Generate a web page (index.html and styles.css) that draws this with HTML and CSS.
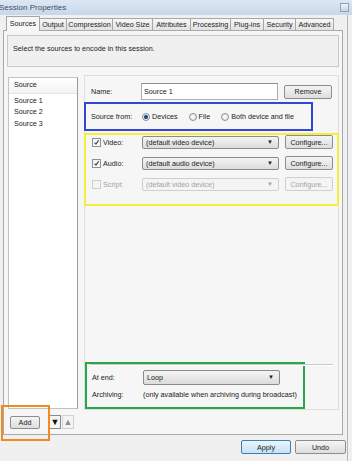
FILE: index.html
```html
<!DOCTYPE html>
<html lang="en">
<head>
    <meta charset="UTF-8">
    <title>Session Properties</title>
    <link rel="stylesheet" href="styles.css">
</head>
<body>
    <div class="window">
        <div class="titlebar">
            <span class="title">Session Properties</span>
            <span class="sysicon"></span>
        </div>
        <div class="client">
            <div class="tabs">
                <div class="tab active" style="width:34px">Sources</div>
                <div class="tab" style="width:28px">Output</div>
                <div class="tab" style="width:47px">Compression</div>
                <div class="tab" style="width:41px">Video Size</div>
                <div class="tab" style="width:39px">Attributes</div>
                <div class="tab" style="width:41px">Processing</div>
                <div class="tab" style="width:34px">Plug-ins</div>
                <div class="tab" style="width:33px">Security</div>
                <div class="tab" style="width:39px">Advanced</div>
            </div>

            <div class="panel">
                <div class="desc">Select the sources to encode in this session.</div>

                <div class="body">
                    <div class="sources">
                        <div class="listbox">
                            <div class="list-head">Source</div>
                            <div class="item">Source 1</div>
                            <div class="item">Source 2</div>
                            <div class="item">Source 3</div>
                        </div>
                        <div class="list-tools">
                            <button class="btn add">Add</button>
                            <button class="arrow down">&#9660;</button>
                            <button class="arrow up">&#9650;</button>
                        </div>
                        <div class="mark orange"></div>
                    </div>

                    <div class="details">
                        <div class="name-row">
                            <span class="label">Name:</span>
                            <div class="input">Source 1</div>
                            <button class="btn remove">Remove</button>
                        </div>

                        <div class="source-from">
                            <span class="label">Source from:</span>
                            <span class="radio on"></span><span class="opt">Devices</span>
                            <span class="radio"></span><span class="opt">File</span>
                            <span class="radio"></span><span class="opt">Both device and file</span>
                        </div>

                        <div class="devices">
                            <div class="dev-row">
                                <span class="check on"><svg viewBox="0 0 9 9"><path d="M2 4.6 L3.8 6.6 L7.2 1.8" /></svg></span>
                                <span class="dev-label">Video:</span>
                                <div class="select">(default video device)<span class="caret">&#9660;</span></div>
                                <button class="btn conf">Configure...</button>
                            </div>
                            <div class="dev-row">
                                <span class="check on"><svg viewBox="0 0 9 9"><path d="M2 4.6 L3.8 6.6 L7.2 1.8" /></svg></span>
                                <span class="dev-label">Audio:</span>
                                <div class="select">(default audio device)<span class="caret">&#9660;</span></div>
                                <button class="btn conf">Configure...</button>
                            </div>
                            <div class="dev-row off">
                                <span class="check"></span>
                                <span class="dev-label">Script:</span>
                                <div class="select">(default video device)<span class="caret">&#9660;</span></div>
                                <button class="btn conf">Configure...</button>
                            </div>
                        </div>

                        <div class="end-box">
                            <div class="sep"></div>
                            <div class="end-row">
                                <span class="label">At end:</span>
                                <div class="select loop">Loop<span class="caret">&#9660;</span></div>
                            </div>
                            <div class="end-row">
                                <span class="label">Archiving:</span>
                                <span>(only available when archiving during broadcast)</span>
                            </div>
                        </div>
                    </div>
                </div>
            </div>

            <div class="footer">
                <button class="btn apply">Apply</button>
                <button class="btn undo">Undo</button>
            </div>
        </div>
    </div>
</body>
</html>
```

FILE: styles.css
```css
* {
    box-sizing: border-box;
}
body {
    margin: 0;
    background-color: #eef0f3;
    font-family: "Liberation Sans", Arial, sans-serif;
    font-size: 7.2px;
    color: #222;
}
button {
    font-family: inherit;
    font-size: inherit;
    color: inherit;
    padding: 0;
}
.window {
    width: 352px;
    height: 461px;
    overflow: hidden;
}
.titlebar {
    height: 15px;
    display: flex;
    align-items: center;
    justify-content: space-between;
    padding-right: 3px;
    background: linear-gradient(#dce7f3, #c6d8eb);
    color: #3d5066;
    font-size: 8px;
}
.title {
    margin-left: -1px;
}
.sysicon {
    width: 9px;
    height: 9px;
    border: 1px solid #8fa2b8;
    background: linear-gradient(#eef3f8, #c9d5e2);
}
.client {
    width: 348px;
    height: 457px;
    background-color: #f0f0f0;
    border-right: 1px solid #b4b4b4;
    border-bottom: 1px solid #8c8c8c;
}
.tabs {
    display: flex;
    align-items: flex-end;
    height: 15px;
    padding-left: 6px;
}
.tab {
    height: 12px;
    line-height: 11px;
    text-align: center;
    border: 1px solid #a7a7a7;
    border-bottom: none;
    margin-right: -1px;
    background: linear-gradient(#f7f7f7, #e2e2e2);
    white-space: nowrap;
}
.tab.active {
    height: 15px;
    line-height: 13px;
    background: #f7f7f7;
    position: relative;
    margin-bottom: -1px;
    z-index: 1;
}
.panel {
    margin-left: 3px;
    width: 340px;
    height: 405px;
    border: 1px solid #a9a9a9;
    background-color: #f6f6f6;
    padding: 4px 3px 0 3px;
}
.desc {
    height: 32px;
    border: 1px solid #c9c9c9;
    background-color: #f0f0f0;
    padding: 8px 5px 0 5px;
}
.body {
    display: flex;
    gap: 6px;
    margin-top: 8px;
    padding-left: 1px;
}
.sources {
    position: relative;
    width: 70px;
    padding-top: 2px;
}
.listbox {
    height: 332px;
    background-color: #fff;
    border: 1px solid #c2c2c2;
    border-right-color: #9b9b9b;
}
.list-head {
    height: 16px;
    line-height: 14px;
    padding-left: 5px;
    background: linear-gradient(#fff, #f3f3f3);
    border-bottom: 1px solid #e5e5e5;
    margin-bottom: 1px;
}
.item {
    height: 11.3px;
    line-height: 11px;
    padding-left: 5px;
}
.list-tools {
    display: flex;
    align-items: center;
    margin-top: 6px;
    padding-left: 2px;
}
.btn {
    height: 14px;
    border: 1px solid #8d8d8d;
    border-radius: 2px;
    background: linear-gradient(#f4f4f4, #dedede);
    text-align: center;
}
.add {
    width: 30px;
    height: 13px;
}
.arrow {
    width: 12px;
    height: 14px;
    font-size: 9px;
    line-height: 12px;
    background-color: #f4f4f4;
}
.arrow.down {
    margin-left: 9px;
    border: 1px solid #8a8a8a;
    color: #111;
}
.arrow.up {
    margin-left: 1px;
    border: 1px solid #d2d2d2;
    color: #8f8f8f;
}
.mark {
    position: absolute;
    pointer-events: none;
}
.orange {
    left: -7px;
    top: 330px;
    width: 49px;
    height: 36px;
    border: 2px solid #f08a24;
}
.details {
    width: 255px;
    height: 335px;
    border: 1px solid #dedede;
    display: flex;
    flex-direction: column;
}
.label {
    width: 51px;
    flex-shrink: 0;
}
.name-row {
    display: flex;
    align-items: center;
    padding: 7px 0 0 6px;
}
.name-row .label {
    width: 50px;
}
.input {
    width: 137px;
    height: 17px;
    line-height: 15px;
    padding-left: 2px;
    background-color: #fff;
    border: 1px solid #acacac;
    border-top-color: #8e8e8e;
}
.remove {
    width: 48px;
    margin-left: 6px;
}
.source-from {
    display: flex;
    align-items: center;
    width: 229px;
    height: 29px;
    margin: 2px 0 0 -1px;
    padding-left: 5px;
    border: 2px solid #3346d6;
}
.radio {
    width: 8px;
    height: 8px;
    border-radius: 50%;
    border: 1px solid #8f8f8f;
    background: radial-gradient(#fff, #dedede);
    margin-right: 2px;
    flex-shrink: 0;
}
.radio.on {
    background: radial-gradient(circle, #1d3a66 0, #2d5a96 1.8px, #f2f2f2 2.4px);
}
.opt {
    margin-right: 11px;
}
.devices {
    width: 255px;
    height: 73px;
    margin: 2px 0 0 -1px;
    padding: 0 0 0 6px;
    border: 2px solid #f4ef3c;
}
.dev-row {
    display: flex;
    align-items: center;
    height: 14px;
    margin-top: 7px;
}
.dev-row:first-child {
    margin-top: 0;
}
.check {
    width: 9px;
    height: 9px;
    border: 1px solid #8e8f8f;
    background: linear-gradient(#f1f1f1, #fff);
    flex-shrink: 0;
    display: flex;
}
.check svg {
    width: 7px;
    height: 7px;
}
.check path {
    fill: none;
    stroke: #27416a;
    stroke-width: 1.4;
}
.dev-label {
    width: 41px;
    padding-left: 2px;
}
.select {
    position: relative;
    width: 137px;
    height: 13px;
    line-height: 11px;
    padding-left: 3px;
    border: 1px solid #8a8a8a;
    border-radius: 2px;
    background: linear-gradient(#f4f4f4, #dcdcdc);
}
.caret {
    position: absolute;
    right: 5px;
    top: 0;
    font-size: 6px;
    line-height: 11px;
}
.conf {
    width: 48px;
    margin-left: 6px;
}
.dev-row.off {
    color: #a3a3a3;
}
.dev-row.off .check,
.dev-row.off .select,
.dev-row.off .conf {
    border-color: #cfcfcf;
    background: #f4f4f4;
}
.end-box {
    margin: auto 0 0 0;
    width: 220px;
    height: 47px;
    padding: 0 0 0 5px;
    border: 2px solid #27a84a;
}
.sep {
    width: 243px;
    height: 2px;
    margin: 0 0 0 -2px;
    background-color: #c9c9c9;
    border-bottom: 1px solid #fff;
}
.end-row {
    display: flex;
    align-items: center;
    height: 16px;
    margin-top: 3px;
}
.end-row + .end-row {
    margin-top: 1px;
}
.loop {
    height: 15px;
    line-height: 13px;
}
.loop .caret {
    line-height: 13px;
}
.footer {
    display: flex;
    justify-content: flex-end;
    gap: 4px;
    padding: 5px 1px 0 0;
}
.apply {
    width: 50px;
    border-color: #3c7fb1;
    background: linear-gradient(#eaf5fc, #c6e2f6);
}
.undo {
    width: 51px;
}
```
